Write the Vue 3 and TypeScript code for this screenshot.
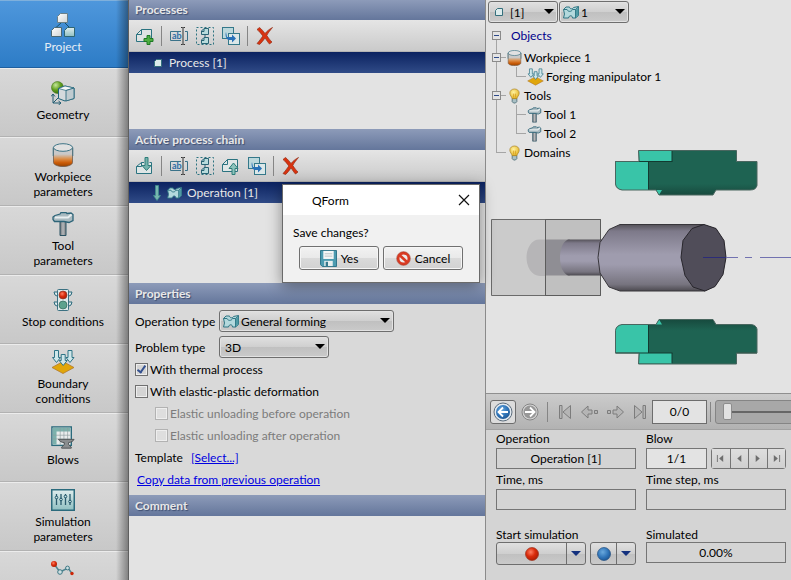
<script setup lang="ts">
import { ref } from 'vue'

interface NavItem { icon: string; label: string }
interface TreeLeaf { icon: string; label: string; wide?: boolean }
interface TreeNode extends TreeLeaf { children: TreeLeaf[] }

const nav: NavItem[] = [
  { icon: 'project', label: 'Project' },
  { icon: 'geometry', label: 'Geometry' },
  { icon: 'cylinder', label: 'Workpiece\nparameters' },
  { icon: 'hammer', label: 'Tool\nparameters' },
  { icon: 'traffic', label: 'Stop conditions' },
  { icon: 'boundary', label: 'Boundary\nconditions' },
  { icon: 'blows', label: 'Blows' },
  { icon: 'sliders', label: 'Simulation\nparameters' },
  { icon: 'trace', label: '' },
]
const activeNav = ref(0)

const processTools = ['add', '|', 'rename', 'chain', 'duplicate', '|', 'delete']
const chainTools = ['insert', '|', 'rename', 'chain', 'export', 'duplicate', '|', 'delete']

const tree: TreeNode[] = [
  { icon: 'cylinder', label: 'Workpiece 1', children: [{ icon: 'boundary', label: 'Forging manipulator 1', wide: true }] },
  { icon: 'bulb', label: 'Tools', children: [{ icon: 'hammer', label: 'Tool 1' }, { icon: 'hammer', label: 'Tool 2' }] },
  { icon: 'bulb', label: 'Domains', children: [] },
]

const thermal = ref(true)
const elastic = ref(false)
const dialogOpen = ref(true)
const frame = ref(0)
</script>

<template>
  <div class="app">
    <svg class="defs" aria-hidden="true">
      <defs>
        <linearGradient id="gPaper" x1="0" y1="0" x2="1" y2="1"><stop offset="0" stop-color="#fff" /><stop offset="1" stop-color="#cfd3d4" /></linearGradient>
        <linearGradient id="gTeal" x1="0" y1="0" x2="0" y2="1"><stop offset="0" stop-color="#e0eeee" /><stop offset="1" stop-color="#8fbfc1" /></linearGradient>
        <linearGradient id="gHot" x1="0" y1="0" x2="0" y2="1"><stop offset="0.35" stop-color="#c9c9c9" /><stop offset="0.6" stop-color="#dc8e48" /><stop offset="0.8" stop-color="#cb5c08" /><stop offset="1" stop-color="#9a4400" /></linearGradient>
        <radialGradient id="gGreen" cx="0.35" cy="0.3" r="0.8"><stop offset="0" stop-color="#c4e69a" /><stop offset="0.5" stop-color="#62a01f" /><stop offset="1" stop-color="#33680a" /></radialGradient>
        <radialGradient id="gRed" cx="0.4" cy="0.35" r="0.7"><stop offset="0" stop-color="#ff7e62" /><stop offset="0.5" stop-color="#d92c0c" /><stop offset="1" stop-color="#a81c04" /></radialGradient>
        <radialGradient id="gBlue" cx="0.4" cy="0.35" r="0.7"><stop offset="0" stop-color="#6aa9dd" /><stop offset="0.6" stop-color="#2f74b8" /><stop offset="1" stop-color="#1d5592" /></radialGradient>
        <radialGradient id="gBulb" cx="0.4" cy="0.35" r="0.7"><stop offset="0" stop-color="#fff2a0" /><stop offset="1" stop-color="#e3b01e" /></radialGradient>
        <linearGradient id="gBody" x1="0" y1="0" x2="0" y2="1"><stop offset="0" stop-color="#555259" /><stop offset="0.1" stop-color="#7d7989" /><stop offset="0.45" stop-color="#9f9cae" /><stop offset="0.6" stop-color="#9f9cae" /><stop offset="0.9" stop-color="#77747f" /><stop offset="1" stop-color="#4c4a50" /></linearGradient>
        <linearGradient id="gDie" x1="0" y1="0" x2="0" y2="1"><stop offset="0.75" stop-color="#1e6352" /><stop offset="1" stop-color="#174a3e" /></linearGradient>
        <linearGradient id="gMetal" x1="0" y1="0" x2="1" y2="0"><stop offset="0" stop-color="#6e7479" /><stop offset="0.5" stop-color="#b4b7ba" /><stop offset="1" stop-color="#777c80" /></linearGradient>
      </defs>

      <symbol id="i-project" viewBox="0 0 24 24">
        <path d="M10.500 9.500L5 14.500M13.500 9.500l5 5" stroke="#164f66" fill="none" />
        <path d="M9.500.5h7v9h-10V3.500z" fill="url(#gPaper)" stroke="#6a8089" />
        <path d="M3.500 14.500h7v9H.5v-6z" fill="url(#gPaper)" stroke="#4a6874" />
        <path d="M16.500 14.500h7v9h-10v-6z" fill="url(#gTeal)" stroke="#2f6674" />
      </symbol>
      <symbol id="i-geometry" viewBox="0 0 24 24">
        <circle cx="6.500" cy="6.500" r="6" fill="url(#gGreen)" stroke="#44751c" stroke-width=".6" />
        <path d="M7.500 7.500L14 5l9 2v10.500L14 20l-6.500-2.500z" fill="#d4dadd" stroke="#1f6378" />
        <path d="M7.500 7.500l7.500 2 8-2.500L14 5z" fill="#f4f6f7" stroke="#1f6378" stroke-width=".7" />
        <path d="M15 9.500l8-2.500v10.500l-8 2.500z" fill="#bfcbd0" stroke="#1f6378" stroke-width=".8" />
        <path d="M2 22V13M0 15.500L2 13l2 2.500M2 22h7.500M7.500 20l2.500 2-2.500 2M2 22l5-5" fill="none" stroke="#1f5a70" />
      </symbol>
      <symbol id="i-cylinder" viewBox="1 0 22 24">
        <path d="M2.500 4.500v15c0 2 4 4 9.500 4s9.500-2 9.500-4v-15z" fill="url(#gHot)" stroke="#6f5b4c" stroke-width=".8" />
        <path d="M2.200 13V4.500M21.800 13V4.500" stroke="#467a8c" />
        <ellipse cx="12" cy="4.500" rx="9.500" ry="3.800" fill="#e1e1e1" stroke="#3f7587" />
      </symbol>
      <symbol id="i-hammer" viewBox="0 0 24 24">
        <path d="M9 9h6v14.500H9z" fill="url(#gMetal)" stroke="#2a5263" />
        <path d="M4 3.500L9 2l1-1.500h5l1 1 4-.5 2 1.500v6l-4 2-5-1H3.500l-1.500-2V5z" fill="#a9bac0" stroke="#2c6478" stroke-width="1.300" />
        <path d="M4 5.500h13l3.500-3" fill="none" stroke="#e8eef0" stroke-width="2" />
      </symbol>
      <symbol id="i-traffic" viewBox="0 0 24 24">
        <path d="M6 4H3l1 3 2 1M18 4h3l-1 3-2 1M6 14H3l1 3 2 1M18 14h3l-1 3-2 1" fill="#dfe9eb" stroke="#2b6a7c" />
        <rect x="6.500" y="1.500" width="11" height="21" rx="1" fill="#dde8e9" stroke="#3b7182" />
        <circle cx="12" cy="7" r="4" fill="url(#gRed)" stroke="#8b3b2c" stroke-width=".7" />
        <circle cx="12" cy="17" r="4" fill="#5da28d" stroke="#33675a" stroke-width=".7" />
      </symbol>
      <symbol id="i-boundary" viewBox="-1 0 24 24">
        <path d="M11 11.500l11 6-11 6-11-6z" fill="#e0a60a" stroke="#b3782d" stroke-width=".8" />
        <path d="M2.500.5h4v7h2l-4 5-4-5h2zM16 .5h4v7h2l-4 5-4-5h2zM9.200 4.500h4v6h2l-4 5-4-5h2z" fill="#cfe7ea" stroke="#2f7486" />
      </symbol>
      <symbol id="i-blows" viewBox="0 0 26 26">
        <rect x="1" y="1" width="21" height="20" fill="#e9ecec" stroke="#2a6a7c" stroke-width="1.500" />
        <path d="M2 2h19v4H6v14H2z" fill="#7cb1ac" />
        <path d="M2 10h19M2 14h19M10 2v18M14 2v18M18 2v18" stroke="#8d9b9e" stroke-width=".7" />
        <path d="M8 14.500h17c-1 2-3 3-6 3.500v2l3 3v1H11.500v-1l3-3v-2c-3 0-5-1.500-6.500-3.500z" fill="#8a8d8f" stroke="#4c5052" />
      </symbol>
      <symbol id="i-sliders" viewBox="0 0 24 24">
        <rect x=".75" y="1.750" width="22.500" height="20.500" fill="url(#gTeal)" stroke="#2b6b7d" stroke-width="1.500" />
        <path d="M5.500 6v11M10 6v11M14.500 6v11M19 6v11" stroke="#2a5a6c" stroke-width="1.300" />
        <circle cx="5.500" cy="9.500" r="1.300" fill="#cfe6e6" stroke="#1e5568" /><circle cx="10" cy="11.500" r="1.300" fill="#cfe6e6" stroke="#1e5568" />
        <circle cx="14.500" cy="8.500" r="1.300" fill="#cfe6e6" stroke="#1e5568" /><circle cx="19" cy="13.500" r="1.300" fill="#cfe6e6" stroke="#1e5568" />
      </symbol>
      <symbol id="i-trace" viewBox="0 0 24 24">
        <path d="M3 7l6 8 8-4 4 5.500" fill="none" stroke="#4f8590" stroke-width="1.500" />
        <circle cx="3" cy="7" r="3" fill="url(#gRed)" /><circle cx="9" cy="15" r="2.300" fill="#cfe0e2" stroke="#3d7784" />
        <circle cx="16.500" cy="11" r="1.900" fill="#cfe0e2" stroke="#3d7784" /><circle cx="21" cy="16.500" r="1.700" fill="#cc2608" />
      </symbol>
      <symbol id="i-bulb" viewBox="0 0 16 16">
        <path d="M5.500 10.500h5v3.500l-1.500 1.500H7L5.500 14z" fill="#a9c0c5" stroke="#3f626d" stroke-width=".8" />
        <path d="M5.500 10.800C5 8.500 3 7.500 3 4.800 3 2.300 5.200.5 8 .5s5 1.800 5 4.300c0 2.700-2 3.700-2.500 6z" fill="url(#gBulb)" stroke="#a57f21" stroke-width=".7" />
        <path d="M7 5.500v4M9 5.500v4" stroke="#d29514" stroke-width=".7" />
      </symbol>
      <symbol id="i-page" viewBox="0 0 10 10"><path d="M3.500 1.500h5v7h-7v-5z" fill="#dcebec" stroke="#35707d" /></symbol>
      <symbol id="i-forming" viewBox="0 0 16 13">
        <path d="M.5 3.500L3 1h3.500c0 2 3 2.500 4 .5L15.500.5v9L12.500 12H9.500C9.500 9 6 9 5.500 12h-5l1-4z" fill="#b4d9dd" stroke="#2f7583" />
        <path d="M.5 3.500h3.500c1 2.500 4.500 2.500 5.500 0h3L15.500.8M12.500 3.500V12" fill="none" stroke="#2f7583" />
        <path d="M12.800 3.800l2.500-2.300v7.800l-2.500 2.200z" fill="#4e99a4" />
      </symbol>

      <symbol id="i-add" viewBox="0 0 18 18">
        <path d="M5.500 2.500h10v12H.5v-7z" fill="#dfe3e3" stroke="#2a7380" /><path d="M5.500 2.500v5h-5" fill="none" stroke="#2a7380" />
        <path d="M11 8.500h3V11.500h3v3h-3v3h-3v-3H8v-3h3z" fill="#4fae42" stroke="#1d7a24" />
      </symbol>
      <symbol id="i-chain" viewBox="0 0 18 18">
        <rect x=".5" y=".5" width="17" height="17" fill="none" stroke="#2a7380" stroke-dasharray="2 2" />
        <path d="M8 1.500h4.500v6h-7V4zM8 10.500h4.500v6h-7V13z" fill="#b9dcdc" stroke="#2a6474" /><path d="M8 2v2.500H5.500M8 11v2.500H5.500M9 7.500v3" fill="none" stroke="#2a6474" />
      </symbol>
      <symbol id="i-duplicate" viewBox="0 0 18 18">
        <rect x=".5" y=".5" width="11" height="11" fill="#bcd8dc" stroke="#34788a" /><rect x="6.500" y="6.500" width="11" height="11" fill="#dbe7e8" stroke="#34788a" />
        <path d="M4 5l1 5h5V7.500l4 4-4 4V13H6.500C4 12 3 8 4 5z" fill="#2871b8" />
      </symbol>
      <symbol id="i-insert" viewBox="0 0 18 18">
        <path d="M8 5.500H5.500l-5 4v7h15v-11H13.500" fill="#dfe6e6" stroke="#2a7380" /><path d="M5.500 5.500v4h-5" fill="none" stroke="#2a7380" />
        <path d="M9 .5h3v8h3L10.500 13.500 6 8.500h3z" fill="#74b3ad" stroke="#2e7d79" />
      </symbol>
      <symbol id="i-export" viewBox="0 0 18 18">
        <path d="M5.500 2.500h10v12H.5v-7z" fill="#dfe6e6" stroke="#2a7380" /><path d="M5.500 2.500v5h-5" fill="none" stroke="#2a7380" />
        <path d="M10 17.500h3v-6h3L11.500 6 7 11.500h3z" fill="#8cc3bc" stroke="#2e7d79" />
      </symbol>
      <symbol id="i-delete" viewBox="0 0 18 18">
        <path d="M1 2.500L3.500.5c2 1.500 4 4 5.500 6 2-2.500 4.500-4.500 7.500-6C14 3.500 12 6 10.800 8.500c1.700 2.500 3.500 5 5.200 6.500l-2.500 2C12 15.500 10.500 13 9 11c-1.500 2-3.500 5-5.500 6.500L1 16.500c2-2 4-5 5.800-7.500C5 6.500 3 4 1 2.500z" fill="#d93310" stroke="#93301a" stroke-width=".7" />
      </symbol>
      <symbol id="i-down" viewBox="0 0 8 16"><path d="M2.500.5h3v10h2L4 15.500.5 10.500h2z" fill="#78b6b0" stroke="#3f8f8e" stroke-width=".8" /></symbol>
      <symbol id="i-first" viewBox="0 0 14 16"><path d="M1.500 1.500h2.500v13H1.500zM12.500 1.500v13L5 8z" fill="#b5b5b5" stroke="#7c7c7c" /></symbol>
      <symbol id="i-last" viewBox="0 0 14 16"><path d="M12.500 1.500H10v13h2.500zM1.500 1.500v13L9 8z" fill="#b5b5b5" stroke="#7c7c7c" /></symbol>
      <symbol id="i-prev" viewBox="0 0 18 16"><path d="M.5 8L7 2v4h4v4H7v4zM13.500 6.500h3v3h-3z" fill="#b5b5b5" stroke="#7c7c7c" /></symbol>
      <symbol id="i-next" viewBox="0 0 18 16"><path d="M17.500 8L11 2v4H7v4h4v4zM1.500 6.500h3v3h-3z" fill="#b5b5b5" stroke="#7c7c7c" /></symbol>
      <symbol id="i-save" viewBox="0 0 18 18">
        <path d="M.5.5h17v17H2.500l-2-2z" fill="#4c9bb0" stroke="#2b7186" /><path d="M3.500 1h11v8.500h-11z" fill="#f4f6f6" /><path d="M5 4h8M5 6.500h8" stroke="#b9c4c6" />
        <path d="M4.500 11.500h9V17h-9z" fill="#e6eeee" /><path d="M6 12.500h2.500V17H6z" fill="#35788c" />
      </symbol>
      <symbol id="i-ban" viewBox="0 0 16 16">
        <circle cx="8" cy="8" r="5.700" fill="#ececec" stroke="#d93a22" stroke-width="2.800" /><path d="M4 4.500l8 7.500" stroke="#d93a22" stroke-width="2.800" /><circle cx="8" cy="8" r="7.300" fill="none" stroke="#a02a18" stroke-width=".6" />
      </symbol>
    </svg>

    <nav class="sidebar" aria-label="Sections">
      <button v-for="(item, i) in nav" :key="item.icon" type="button" class="nav-item" :class="{ active: i === activeNav, bare: !item.label }" @click="activeNav = i">
        <svg class="nav-icon"><use :href="'#i-' + item.icon" /></svg>
        <span v-if="item.label" class="nav-label">{{ item.label }}</span>
      </button>
    </nav>

    <main class="middle">
      <section v-for="(tools, s) in [processTools, chainTools]" :key="s" class="panel">
        <h2 class="head" :class="{ first: s === 0 }">{{ s === 0 ? 'Processes' : 'Active process chain' }}</h2>
        <div class="toolbar">
          <template v-for="(t, i) in tools" :key="i">
            <span v-if="t === '|'" class="sep"></span>
            <button v-else type="button" class="tool" :aria-label="t">
              <svg v-if="t === 'rename'" class="tool-icon" viewBox="0 0 18 18">
                <path d="M11 4.500H.5v9H11M15 4.500h2.500v9H15" fill="none" stroke="#3a7289" />
                <text x="2" y="12" class="glyph">ab</text>
                <path d="M11 .5h1.500l.5.5.5-.5H15M13 1v16M11 17.500h1.500l.5-.5.5.5H15" fill="none" stroke="#333" />
              </svg>
              <svg v-else class="tool-icon"><use :href="'#i-' + t" /></svg>
            </button>
          </template>
        </div>
        <div v-if="s === 0" class="list short">
          <div class="row"><svg class="row-page"><use href="#i-page" /></svg>Process [1]</div>
        </div>
        <div v-else class="list tall">
          <div class="row"><svg class="row-down"><use href="#i-down" /></svg><svg class="row-forming"><use href="#i-forming" /></svg>Operation [1]</div>
        </div>
      </section>

      <section class="panel">
        <h2 class="head">Properties</h2>
        <form class="props" @submit.prevent>
          <div class="prop">
            <label class="prop-label" for="optype">Operation type</label>
            <span class="combo type-combo has-icon">
              <svg class="combo-icon"><use href="#i-forming" /></svg>
              <select id="optype"><option>General forming</option></select>
            </span>
          </div>
          <div class="prop">
            <label class="prop-label" for="probtype">Problem type</label>
            <span class="combo problem-combo"><select id="probtype"><option>3D</option></select></span>
          </div>
          <div class="checks">
            <label class="check"><input v-model="thermal" type="checkbox">With thermal process</label>
            <label class="check"><input v-model="elastic" type="checkbox">With elastic-plastic deformation</label>
            <label class="check sub"><input type="checkbox" disabled>Elastic unloading before operation</label>
            <label class="check sub"><input type="checkbox" disabled>Elastic unloading after operation</label>
            <div class="check">Template<a class="select-link" href="#template">[Select...]</a></div>
            <div class="check"><a class="copy-link" href="#copy">Copy data from previous operation</a></div>
          </div>
        </form>
      </section>

      <section class="panel comment">
        <h2 class="head">Comment</h2>
        <div class="list"></div>
      </section>
    </main>

    <aside class="right">
      <div class="viewport">
        <svg class="scene" viewBox="486 0 305 393" role="img" aria-label="Workpiece between tools">
          <g id="upper-die">
            <path d="M638.500 150.500h98v11H757v24q-1 4.500-7 4.500H716l-3 5h-54l-3-5h-34q-6-1-6.500-6v-22.500h23.500z" fill="url(#gDie)" />
            <path d="M639 151h33v10.500h-23.500V190h-26q-6-1-7-6v-22.500h24z" fill="#39c4a8" />
            <path d="M656 190l3 5 3-5z" fill="#39c4a8" />
            <path d="M672 151v10.500M648.500 161.500V190M615.500 161.500h57M737 161.500h20" fill="none" stroke="#123a30" />
            <path d="M638.500 150.500h98v11H757v24q-1 4.500-7 4.500H716l-3 5h-54l-3-5h-34q-6-1-6.500-6v-22.500h23.500z" fill="none" stroke="#49665f" />
          </g>
          <use href="#upper-die" transform="matrix(1 0 0 -1 0 514.500)" />
          <path d="M546 239.500h-7c-7 0-12.500 8-12.500 18s5.500 18.500 13.500 18.500h6z" fill="#cbcacc" />
          <path d="M545.500 239.500H570v36h-24.500z" fill="#a9a8ae" />
          <path d="M491.500 219.500h109v76h-109z" fill="#000" fill-opacity=".1" stroke="#6b6b6b" />
          <path d="M545.500 219.500h55v76h-55z" fill="#000" fill-opacity=".05" stroke="#5c5c5c" />
          <path d="M568 239.500h34v36h-34c-5-2-8-9-8-18s3-16 8-18z" fill="url(#gBody)" />
          <path d="M620 224.500h84l12 4 8 12 2 17-3 17-8 12-10 4.500h-85l-11-4-9-14-2-15.500 2-15 9-13z" fill="url(#gBody)" />
          <path d="M704 224.500h-84l-11 5-9 13-2 15 2 15.500 9 14 11 4h85" fill="none" stroke="#38363b" />
          <path d="M704 224.500l12 4 8 12 2 17-3 17-8 12-10 4.500-12-4-8-11.500-4-18 2-17 9-12z" fill="#504d59" stroke="#28262c" />
          <path d="M703 257.500h23" stroke="#2c2c78" />
          <path d="M726 257.500h12M745 257.500h7M760 257.500h31" stroke="#7272b0" />
        </svg>
        <div class="pickers">
          <span class="combo has-icon"><svg class="combo-page"><use href="#i-page" /></svg><select aria-label="Process"><option>[1]</option></select></span>
          <span class="combo has-icon"><svg class="combo-icon"><use href="#i-forming" /></svg><select aria-label="Operation"><option>1</option></select></span>
        </div>
        <div class="tree">
          <div class="tree-root"><button type="button" class="toggle" aria-label="Collapse"></button><span>Objects</span></div>
          <ul class="branches">
            <li v-for="node in tree" :key="node.label">
              <button v-if="node.children.length" type="button" class="toggle" aria-label="Collapse"></button>
              <div class="node"><svg class="node-icon"><use :href="'#i-' + node.icon" /></svg>{{ node.label }}</div>
              <ul v-if="node.children.length" class="leaves">
                <li v-for="leaf in node.children" :key="leaf.label">
                  <div class="node"><svg class="node-icon" :class="{ wide: leaf.wide }"><use :href="'#i-' + leaf.icon" /></svg>{{ leaf.label }}</div>
                </li>
              </ul>
            </li>
          </ul>
        </div>
      </div>

      <div class="player">
        <button type="button" class="round pressed" aria-label="Back">
          <svg viewBox="0 0 20 20"><circle cx="10" cy="10" r="9" fill="#e3eaf0" stroke="#5b6c7c" /><circle cx="10" cy="10" r="7" fill="url(#gBlue)" /><path d="M15 10H6M10 5.500L5.500 10l4.500 4.500" fill="none" stroke="#fff" stroke-width="1.800" /></svg>
        </button>
        <button type="button" class="round" aria-label="Forward">
          <svg viewBox="0 0 20 20"><circle cx="10" cy="10" r="8" fill="#d4d4d4" stroke="#858585" /><circle cx="10" cy="10" r="6.500" fill="#979797" /><path d="M5 10h9M10 5.500l4.500 4.500-4.500 4.500" fill="none" stroke="#fff" stroke-width="1.800" /></svg>
        </button>
        <span class="bar-sep"></span>
        <button type="button" class="step" aria-label="First"><svg class="step-narrow"><use href="#i-first" /></svg></button>
        <button type="button" class="step" aria-label="Previous"><svg class="step-wide"><use href="#i-prev" /></svg></button>
        <button type="button" class="step" aria-label="Next"><svg class="step-wide"><use href="#i-next" /></svg></button>
        <button type="button" class="step" aria-label="Last"><svg class="step-narrow"><use href="#i-last" /></svg></button>
        <input class="counter" type="text" value="0/0" aria-label="Frame">
        <span class="bar-sep"></span>
        <span class="slider"><input v-model="frame" type="range" min="0" max="100" aria-label="Timeline"></span>
      </div>

      <form class="status" @submit.prevent>
        <div class="field"><label for="f-op">Operation</label><input id="f-op" type="text" value="Operation [1]" readonly></div>
        <div class="field">
          <label for="f-blow">Blow</label>
          <div class="blow-row">
            <input id="f-blow" class="blow-input" type="text" value="1/1">
            <div class="blow-nav">
              <button type="button" aria-label="First blow"><svg viewBox="0 0 10 10"><path d="M1 1h1v8H1zM8 1v8L3.500 5z" fill="#6e6e6e" /></svg></button>
              <button type="button" aria-label="Previous blow"><svg viewBox="0 0 10 10"><path d="M7 1v8L2.500 5z" fill="#6e6e6e" /></svg></button>
              <button type="button" aria-label="Next blow"><svg viewBox="0 0 10 10"><path d="M3 1v8l4.500-4z" fill="#6e6e6e" /></svg></button>
              <button type="button" aria-label="Last blow"><svg viewBox="0 0 10 10"><path d="M8 1h1v8H8zM2 1v8l4.500-4z" fill="#6e6e6e" /></svg></button>
            </div>
          </div>
        </div>
        <div class="field"><label for="f-time">Time, ms</label><input id="f-time" type="text" readonly></div>
        <div class="field"><label for="f-step">Time step, ms</label><input id="f-step" type="text" readonly></div>
        <div class="field last">
          <span class="caption">Start simulation</span>
          <div class="starts">
            <div class="split big">
              <button type="button" aria-label="Start"><svg class="dot" viewBox="0 0 14 14"><circle cx="7" cy="7" r="6.500" fill="url(#gRed)" stroke="#9c3420" stroke-width=".7" /></svg></button>
              <button type="button" class="drop" aria-label="Start options"></button>
            </div>
            <div class="split">
              <button type="button" aria-label="Record"><svg class="dot" viewBox="0 0 14 14"><circle cx="7" cy="7" r="6.500" fill="url(#gBlue)" stroke="#234f80" stroke-width=".7" /></svg></button>
              <button type="button" class="drop" aria-label="Record options"></button>
            </div>
          </div>
        </div>
        <div class="field last"><label for="f-sim">Simulated</label><input id="f-sim" type="text" value="0.00%" readonly></div>
      </form>
    </aside>

    <div v-if="dialogOpen" class="dialog" role="dialog" aria-labelledby="dlg-title">
      <div class="dlg-bar">
        <span id="dlg-title">QForm</span>
        <button type="button" class="close" aria-label="Close" @click="dialogOpen = false"><svg viewBox="0 0 12 12"><path d="M1 1l10 10M11 1L1 11" stroke="#111" stroke-width="1.200" /></svg></button>
      </div>
      <div class="dlg-body">
        <p>Save changes?</p>
        <div class="dlg-actions">
          <button type="button" @click="dialogOpen = false"><svg class="save"><use href="#i-save" /></svg>Yes</button>
          <button type="button" @click="dialogOpen = false"><svg class="ban"><use href="#i-ban" /></svg>Cancel</button>
        </div>
      </div>
    </div>
  </div>
</template>

<style>
body { margin: 0; background: #d9d9d9; }
</style>

<style scoped>
.app { position: relative; display: grid; grid-template-columns: 129px 357px minmax(0, 1fr); height: 100vh; overflow: hidden; font: 12px/15px Lato, "Noto Sans", sans-serif; color: #000; }
.app *, .app *::before, .app *::after { box-sizing: border-box; }
.defs { position: absolute; width: 0; height: 0; }
button, input, select { font: inherit; color: inherit; margin: 0; padding: 0; }
svg { display: block; flex: none; }
.glyph { font-size: 9px; font-weight: 700; fill: #2f6ea5; }

.sidebar { position: relative; display: flex; flex-direction: column; overflow: hidden; border-right: 1px solid #5f5f5f; background: #cecece; }
.sidebar::after { content: ""; position: absolute; top: 0; right: 0; bottom: 0; width: 12px; background: linear-gradient(to right, rgba(0, 0, 0, 0), rgba(0, 0, 0, .38)); pointer-events: none; }
.nav-item { flex: none; display: flex; flex-direction: column; align-items: center; justify-content: center; height: 69px; padding: 0 2px 2px 0; border: 0; border-top: 1px solid #ececec; border-bottom: 1px solid #b2b2b2; background: linear-gradient(#d8d8d8, #c8c8c8); }
.nav-item.active { height: 68px; border-top-color: #7fb0dc; border-bottom-color: #1f5f9f; background: linear-gradient(#4e97dc, #2d7cc6); color: #e6edf5; }
.nav-item.bare { justify-content: flex-start; padding-top: 5px; }
.nav-icon { width: 24px; height: 24px; margin-bottom: 2px; }
.nav-label { white-space: pre-line; text-align: center; }

.middle { display: flex; flex-direction: column; min-width: 0; border-right: 1px solid #8b8b8b; }
.head { margin: 0; height: 21px; padding: 0 6px; font-size: 12px; line-height: 21px; font-weight: 700; color: #e8e8e8; text-shadow: 1px 1px 1px #3d4d70; background: linear-gradient(#8d9bb9, #64769b); }
.head.first { height: 20px; line-height: 20px; }
.toolbar { display: flex; align-items: center; gap: 2px; height: 32px; padding-left: 4px; background: linear-gradient(#e5e5e5, #cacaca); border-bottom: 1px solid #b4b4b4; }
.tool { display: grid; place-items: center; width: 24px; height: 24px; border: 0; background: none; }
.tool-icon { width: 18px; height: 18px; }
.sep { width: 1px; height: 20px; margin: 0 3px 0 2px; background: #858585; }
.list { background: #e3e3e3; }
.short { height: 77px; }
.tall { height: 101px; }
.row { display: flex; align-items: center; height: 21px; padding-left: 24px; color: #e8e8e8; background: linear-gradient(#0b2260, #304b87); }
.row-page { width: 10px; height: 10px; margin-right: 6px; }
.row-down { width: 8px; height: 16px; margin-right: 6px; }
.row-forming { width: 15px; height: 12px; margin-right: 5px; }
.comment { flex: 1; display: flex; flex-direction: column; }
.comment .list { flex: 1; }

.props { display: flex; flex-direction: column; gap: 4px; padding: 6px 6px 5px; background: #d9d9d9; }
.prop { display: flex; align-items: center; height: 22px; }
.prop-label { width: 84px; white-space: nowrap; }
.combo { position: relative; display: block; height: 22px; }
.combo select { appearance: none; width: 100%; height: 22px; padding: 0 16px 0 5px; border: 1px solid #6e6e6e; border-radius: 3px; outline: none; background: linear-gradient(#e0e0e0, #cfcfcf 50%, #c0c0c0 51%, #cacaca); box-shadow: inset 0 0 0 1px #e2e2e2; }
.combo::after { content: ""; position: absolute; right: 4px; top: 8px; border: 5px solid transparent; border-top-color: #000; border-bottom: 0; pointer-events: none; }
.combo.has-icon select { padding-left: 21px; }
.combo-icon { position: absolute; left: 4px; top: 5px; width: 16px; height: 13px; }
.combo-page { position: absolute; left: 6px; top: 6px; width: 10px; height: 10px; }
.type-combo { width: 175px; }
.problem-combo { width: 110px; }
.checks { margin-top: -4px; }
.check { display: flex; align-items: center; height: 22px; white-space: nowrap; }
.check input { appearance: none; position: relative; width: 13px; height: 13px; margin-right: 2px; border: 1px solid #707070; background: #d4d4d4; box-shadow: inset 0 0 0 1px #eee; }
.check input:checked::after { content: ""; position: absolute; left: 3px; top: 0; width: 5px; height: 9px; border: solid #33508f; border-width: 0 2px 2px 0; transform: rotate(35deg); }
.sub { padding-left: 20px; color: #7c7c7c; }
.check input:disabled { border-color: #b2b2b2; background: #dedede; }
.select-link { margin-left: 8px; }
.copy-link { margin-left: 2px; }
a { color: #0000e0; text-decoration: underline; }

.right { display: flex; flex-direction: column; min-width: 0; background: #d4d4d4; }
.viewport { position: relative; flex: 1; min-height: 0; overflow: hidden; background: #e3e3e3; }
.scene { position: absolute; inset: 0; width: 100%; height: 100%; }
.pickers { position: relative; display: flex; gap: 1px; padding: 1px 2px; }
.pickers .combo { width: 70px; }
.tree { position: relative; padding-left: 6px; }
.tree-root { position: relative; display: flex; align-items: center; height: 24px; padding: 0 0 2px 19px; color: #00008b; }
ul { list-style: none; margin: 0; padding: 0; }
.branches li { position: relative; padding-left: 15px; }
.branches li::before, .branches li::after { content: ""; position: absolute; left: 4px; background: #a5a5a5; }
.branches li::before { top: 0; bottom: 0; width: 1px; }
.branches li::after { top: 9px; width: 10px; height: 1px; }
.branches li:first-child::before { top: -8px; }
.branches li:last-child::before { bottom: auto; height: 10px; }
.branches .leaves li { padding-left: 20px; }
.branches .leaves li::before, .branches .leaves li::after { left: 9px; }
.branches .leaves li:first-child::before { top: 0; }
.node { display: flex; align-items: center; height: 19px; white-space: nowrap; }
.node-icon { width: 15px; height: 16px; margin-right: 2px; }
.node-icon.wide { width: 17px; height: 18px; }
.toggle { position: absolute; z-index: 1; left: 0; top: 5px; width: 9px; height: 9px; border: 1px solid #8a8a8a; background: linear-gradient(#2d4a8a, #2d4a8a) center / 5px 1px no-repeat, #e3e3e3; }
.tree-root .toggle { top: 7px; }

.player { display: flex; align-items: center; height: 37px; padding-left: 4px; overflow: hidden; border-top: 1px solid #8f8f8f; border-bottom: 1px solid #a2a2a2; background: linear-gradient(#cbcbcb, #b2b2b2); }
.round { display: grid; place-items: center; flex: none; width: 26px; height: 24px; margin-right: 1px; border: 1px solid transparent; border-radius: 3px; background: none; }
.round svg { width: 20px; height: 20px; }
.pressed { border-color: #6d6d6d; background: #dcdcdc; }
.bar-sep { flex: none; width: 1px; height: 20px; margin: 0 4px 0 3px; background: #858585; }
.step { display: grid; place-items: center; flex: none; width: 25px; height: 24px; border: 0; background: none; }
.step-narrow { width: 14px; height: 16px; }
.step-wide { width: 18px; height: 16px; }
.counter { flex: none; width: 55px; height: 24px; border: 1px solid #6d6d6d; background: #e3e3e3; text-align: center; }
.slider { flex: 1; display: flex; align-items: center; min-width: 0; height: 24px; margin-right: -8px; padding: 0 7px; border: 1px solid #858585; border-radius: 3px; background: #a8a8a8; }
.slider input { appearance: none; width: 100%; height: 18px; background: linear-gradient(#666, #666) center / 100% 2px no-repeat; }
.slider input::-webkit-slider-thumb { appearance: none; width: 9px; height: 17px; border: 1px solid #8d8d8d; border-radius: 2px; background: #e2e2e2; }

.status { display: grid; grid-template-columns: minmax(0, 1fr) minmax(0, 1fr); column-gap: 10px; padding: 1px 5px 18px 10px; }
.field { display: flex; flex-direction: column; height: 41px; }
.field.last { height: 35px; margin-top: 14px; }
.field label, .caption { height: 17px; line-height: 15px; }
.field input { width: 100%; height: 21px; flex: none; border: 1px solid #757575; background: #d4d4d4; text-align: center; }
.blow-row { display: flex; gap: 4px; }
.field .blow-input { width: 61px; background: #e3e3e3; }
.blow-nav { flex: 1; display: flex; border: 1px solid #757575; border-radius: 3px; height: 21px; }
.blow-nav button { flex: 1; display: grid; place-items: center; border: 0; background: linear-gradient(#dedede, #d0d0d0); }
.blow-nav button + button { border-left: 1px solid #757575; }
.blow-nav svg { width: 9px; height: 9px; }
.starts { display: flex; gap: 4px; }
.split { display: flex; height: 23px; width: 46px; border: 1px solid #6e6e6e; border-radius: 3px; background: linear-gradient(#e0e0e0, #cfcfcf 50%, #c0c0c0 51%, #cacaca); }
.split.big { flex: 1; }
.split button { flex: 1; display: grid; place-items: center; border: 0; background: none; }
.split .drop { flex: none; width: 19px; border-left: 1px solid #6e6e6e; }
.drop::after { content: ""; border: 5px solid transparent; border-top-color: #14317e; border-bottom: 0; }
.dot { width: 14px; height: 14px; }

.dialog { position: absolute; left: 282px; top: 184px; width: 198px; border: 1px solid #6a6a6a; background: #f1f1f1; box-shadow: 0 3px 14px rgba(0, 0, 0, .4); }
.dlg-bar { display: flex; align-items: center; justify-content: space-between; height: 30px; padding: 0 9px 0 29px; background: #fff; }
.close { width: 12px; height: 12px; border: 0; background: none; }
.dlg-body { padding: 10px 10px 12px; }
.dlg-body p { margin: 0 0 6px; }
.dlg-actions { display: flex; gap: 4px; padding: 0 6px; }
.dlg-actions button { flex: 1; display: flex; align-items: center; justify-content: center; gap: 4px; height: 24px; border: 1px solid #707070; border-radius: 3px; background: linear-gradient(#f2f2f2, #e9e9e9 50%, #dadada 51%, #d2d2d2); box-shadow: inset 0 0 0 1px #f6f6f6; }
.save { width: 17px; height: 17px; }
.ban { width: 15px; height: 15px; }
</style>
